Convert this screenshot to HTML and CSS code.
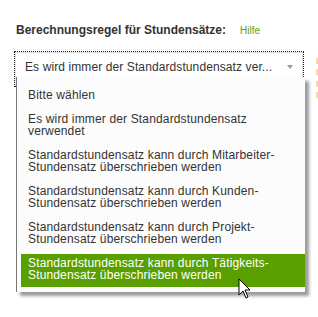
FILE: index.html
```html
<!DOCTYPE html>
<html lang="de">
<head>
  <meta charset="UTF-8">
  <meta name="viewport" content="width=device-width, initial-scale=1.0">
  <title>Berechnungsregel</title>
  <link rel="stylesheet" href="styles.css">
</head>
<body>
  <div class="field">
    <div class="label-row">
      <label for="rule">Berechnungsregel für Stundensätze:</label>
      <a class="help" href="#">Hilfe</a>
    </div>
    <div class="select-wrap">
      <div class="select" id="rule">
        <span class="select-text">Es wird immer der Standardstundensatz ver...</span>
        <span class="arrow"></span>
      </div>
      <div class="menu">
        <div class="menu-item">Bitte wählen</div>
        <div class="menu-item">Es wird immer der Standardstundensatz<br>verwendet</div>
        <div class="menu-item">Standardstundensatz kann durch Mitarbeiter-<br>Stundensatz überschrieben werden</div>
        <div class="menu-item">Standardstundensatz kann durch Kunden-<br>Stundensatz überschrieben werden</div>
        <div class="menu-item">Standardstundensatz kann durch Projekt-<br>Stundensatz überschrieben werden</div>
        <div class="menu-item active">Standardstundensatz kann durch Tätigkeits-<br>Stundensatz überschrieben werden</div>
      </div>
      <svg class="cursor" width="14" height="22" viewBox="0 0 14 22">
        <polygon points="1,1 1,17 5,13 8,20 10,19 7,12 12,12" fill="#fff" stroke="#000" stroke-width="1"/>
      </svg>
    </div>
  </div>
  <div class="edge"></div>
</body>
</html>
```

FILE: styles.css
```css
html, body {
  height: 100%;
}
body {
  margin: 0;
  padding: 0;
  min-height: 317px;
  background: #fff;
  font-family: "Liberation Sans", Arial, sans-serif;
  font-size: 12px;
  color: #333;
}
.field {
  padding: 23px 0 0 16px;
}
.label-row {
  display: flex;
  align-items: center;
  height: 14px;
}
label {
  font-weight: bold;
  color: #333;
}
.help {
  margin-left: 14px;
  font-size: 10px;
  color: #5c9e0a;
  text-decoration: none;
}
.select-wrap {
  position: relative;
  width: 288px;
  margin: 14px 0 0 -2px;
  border: 1px dotted #222;
}
.select {
  display: flex;
  align-items: center;
  height: 28px;
  padding: 0 8px 4px 9px;
  border: 1px solid #e2e2e2;
  background: #fff;
}
.select-text {
  flex: 1;
  white-space: nowrap;
  overflow: hidden;
  letter-spacing: 0.1px;
}
.arrow {
  width: 0;
  height: 0;
  border-left: 3px solid transparent;
  border-right: 3px solid transparent;
  border-top: 4px solid #9a9a9a;
  margin-right: 1px;
}
.menu {
  position: absolute;
  top: 25px;
  left: 1px;
  width: 284px;
  padding: 9px 0 5px 4px;
  background: #fcfcfc;
  border-left: 1px solid #777;
  box-shadow: 4px 4px 3px #9c9c9c;
}
.menu-item {
  padding: 3px 6px 5px 7px;
  margin-bottom: 3px;
  line-height: 12.5px;
  letter-spacing: 0.15px;
}
.menu-item:last-child {
  margin-bottom: 0;
}
.menu-item.active {
  background: #5a9f00;
  color: #fff;
}
.cursor {
  position: absolute;
  top: 226px;
  left: 223px;
}
.edge {
  position: absolute;
  top: 58px;
  right: 0;
  width: 2px;
  height: 40px;
  border-right: 2px dashed #f6d9a8;
}
```
